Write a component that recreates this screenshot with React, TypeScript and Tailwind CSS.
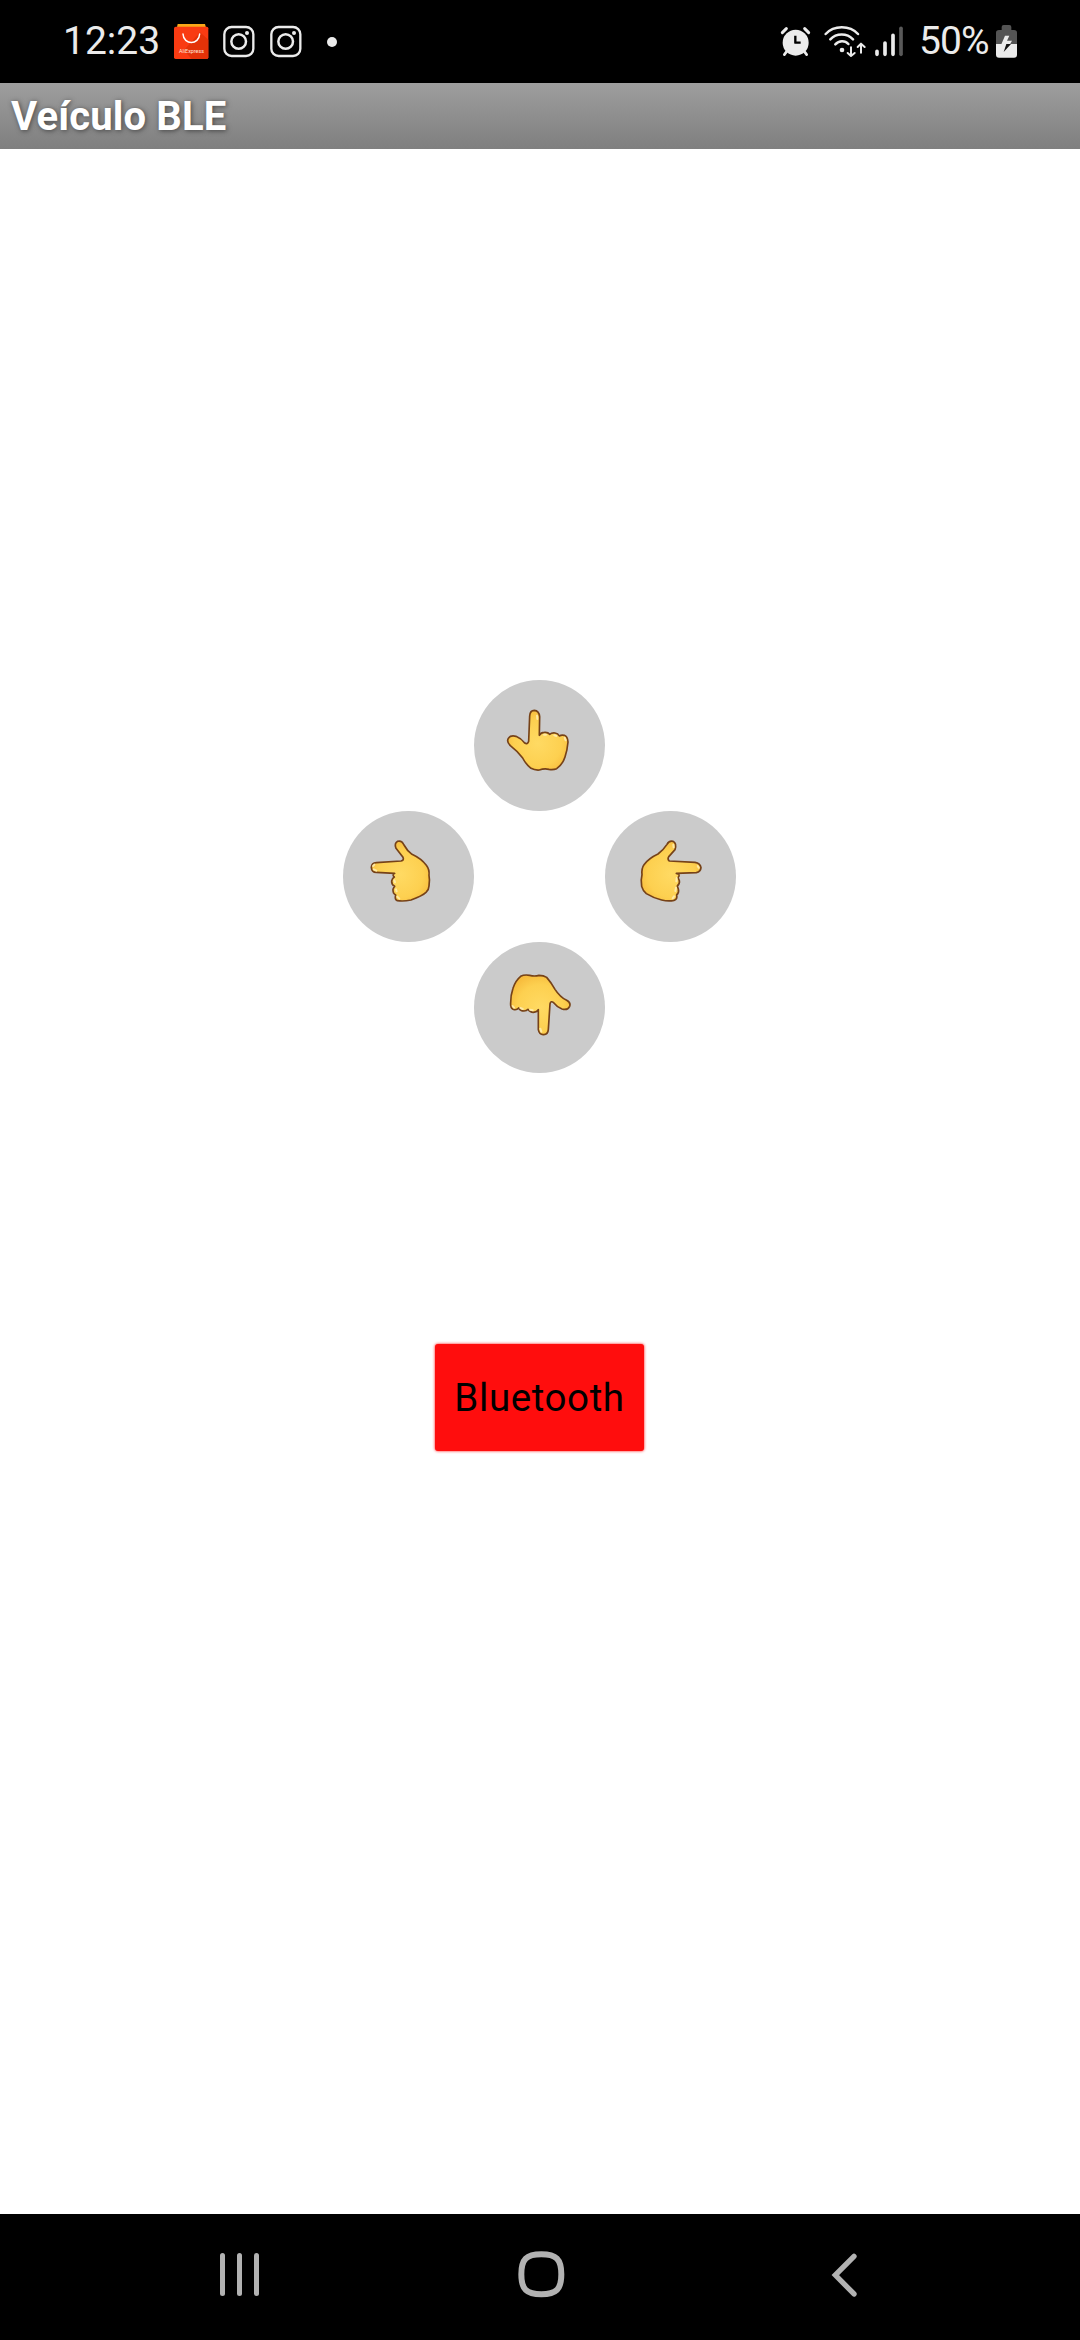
import type { ReactNode } from "react";

type HandProps = { id: string; viewBox: string; outline: string; shine: string; label: string; className: string };

function HandButton({ id, viewBox, outline, shine, label, className }: HandProps) {
  return (
    <button aria-label={label} className={`size-[131px] rounded-full bg-[#cbcbcb] ${className}`}>
      <svg viewBox={viewBox} className="size-[131px]" fill="none">
        <defs>
          <radialGradient id={id} cx="0.5" cy="0.55" r="0.65">
            <stop offset="0" stopColor="#ffda63" />
            <stop offset="0.6" stopColor="#fdd050" />
            <stop offset="1" stopColor="#f5b435" />
          </radialGradient>
        </defs>
        <path d={outline} fill={`url(#${id})`} stroke="#764218" strokeWidth="5" strokeLinejoin="round" />
        <path d={shine} stroke="#ffefb5" strokeWidth="6" strokeLinecap="round" strokeLinejoin="round" opacity="0.85" />
      </svg>
    </button>
  );
}

const hands: HandProps[] = [
  {
    id: "hand-up",
    label: "Frente",
    className: "col-start-2 row-start-1",
    viewBox: "12 12 393 393",
    outline:
      "M176 196L179 120Q180 103 193 103Q207 104 209 122L208 178Q213 169 223 169Q234 168 239 175Q245 170 255 171Q264 172 268 180Q274 176 283 178Q293 182 294 198Q292 222 285 243Q278 265 260 278Q250 282 237 280Q222 277 208 282Q194 283 183 277Q167 264 158 246Q143 226 121 209Q109 197 115 187Q121 177 138 181Q153 187 164 201Q173 206 176 196Z",
    shine: "M201 119L202 129M284 185L287 193M222 176L228 176M253 178L259 180",
  },
  {
    id: "hand-left",
    label: "Esquerda",
    className: "col-start-1 row-start-2",
    viewBox: "9 15 393 393",
    outline:
      "M183 165Q193 163 189 154L168 127Q162 112 173 106Q185 102 192 117Q201 134 216 145Q244 158 259 178Q269 191 267 208Q270 222 267 240Q267 250 258 259Q246 270 213 282Q190 287 172 284Q163 280 167 267Q158 262 159 250Q161 244 164 241Q154 235 155 225Q157 216 163 213Q155 207 164 202L109 199Q95 199 94 184Q95 171 109 170Z",
    shine: "M99 180L103 176M101 190L109 194M163 223L165 229M168 250L170 256M172 272L178 278",
  },
  {
    id: "hand-right",
    label: "Direita",
    className: "col-start-3 row-start-2",
    viewBox: "15 15 393 393",
    outline:
      "M208 165Q201 160 207 151L225 131Q231 112 219 106Q207 103 201 115Q190 132 174 144Q146 157 132 176Q124 187 126 206Q122 220 125 241Q128 253 139 263Q158 275 185 282Q206 287 222 283Q233 280 230 267Q238 260 235 249L232 240Q240 233 238 224L234 215Q243 205 229 202L289 200Q302 197 303 185Q301 172 285 169Z",
    shine: "M293 180L296 185M220 116L221 124M230 216L229 226M228 245L226 255M222 271L218 277",
  },
  {
    id: "hand-down",
    label: "Trás",
    className: "col-start-2 row-start-3",
    viewBox: "12 12 393 393",
    outline:
      "M205 215L205 275Q208 291 221 290Q234 289 235 274L240 198Q242 187 251 194Q261 207 276 213Q293 218 299 205Q303 194 290 187Q270 177 255 154Q244 134 230 118Q221 112 207 112Q194 116 179 112Q163 109 152 115Q136 128 129 151Q121 174 122 202Q124 214 133 215Q141 216 146 210Q151 219 162 219Q170 219 174 214Q180 223 190 223Q202 222 205 215Z",
    shine: "M128 204L132 209M151 210L158 213M180 215L188 217M211 272L214 281",
  },
];

/** Status bar glyph drawn at three units per pixel over the full bar height. */
function Glyph({ x, width, className, children }: { x: number; width: number; className: string; children: ReactNode }) {
  return (
    <svg viewBox={`${x} 0 ${width} 249`} className={`h-[83px] shrink-0 ${className}`} fill="none" strokeLinecap="round" strokeLinejoin="round">
      {children}
    </svg>
  );
}

function Instagram({ className }: { className: string }) {
  return (
    <Glyph x={548} width={96} className={`w-8 ${className}`}>
      <rect x="552" y="81" width="87" height="87" rx="22" stroke="#ebebeb" strokeWidth="7" />
      <circle cx="595" cy="124.500" r="22" stroke="#ebebeb" strokeWidth="7.500" />
      <circle cx="620" cy="99" r="6" fill="#ebebeb" />
    </Glyph>
  );
}

function StatusBar() {
  return (
    <header className="flex h-[83px] shrink-0 items-center bg-black text-[#ebebeb]">
      <span className="ml-[63px] w-[111px] shrink-0 text-[39px] leading-none">12:23</span>
      <Glyph x={402} width={105} className="w-[35px]">
        <path d="M410 86L413 72H495L499 86Z" fill="#f9a718" />
        <rect x="402" y="80" width="103" height="97" rx="5" fill="#f93b12" />
        <path d="M480 97L505 119V172Q505 177 500 177H455L432 151Z" fill="#e33208" />
        <path d="M429 102C431 136 477 136 479 102" stroke="#fff" strokeWidth="4.500" />
        <text x="417" y="158" fontSize="17" fill="#ffe5dc" textLength="75" lengthAdjust="spacingAndGlyphs">AliExpress</text>
      </Glyph>
      <Instagram className="ml-[13.660px]" />
      <Instagram className="ml-[15px]" />
      <span className="ml-[25.500px] size-[10px] shrink-0 rounded-full bg-[#ebebeb]" />

      <Glyph x={60} width={96} className="ml-auto w-8">
        <g stroke="#ebebeb">
          <path d="M67 98L79 86M146 98L134 86" strokeWidth="9" />
          <path d="M82 152L73 164M131 152L140 164" strokeWidth="8" />
        </g>
        <circle cx="107" cy="128" r="39" fill="#ebebeb" />
        <path d="M106 107V128H122" stroke="#000" strokeWidth="7" strokeLinecap="butt" />
      </Glyph>
      <Glyph x={192} width={129} className="ml-[12px] w-[43px]">
        <g stroke="#ebebeb" strokeWidth="7.500">
          <path d="M197 102C222 75 269 75 294 102M211 118C229 99 261 99 279 118M226 133C237 121 255 121 265 132" />
          <path d="M273 142V166M263 159L273 168L284 159M303 158V134M293 141L303 131L314 141" strokeWidth="6" />
        </g>
        <circle cx="246" cy="150" r="7" fill="#ebebeb" />
      </Glyph>
      <Glyph x={342} width={90} className="ml-[7px] w-[30px]">
        <path d="M351 154V163M375 129V163M399 106V163" stroke="#ebebeb" strokeWidth="11" />
        <path d="M423 85V163" stroke="#595959" strokeWidth="11" />
      </Glyph>
      <span className="ml-[15px] w-[77px] shrink-0 text-[39px] leading-none tracking-[-0.900px]">50%</span>
      <Glyph x={708} width={63} className="mr-[63px] w-[21px]">
        <path d="M708 132V98Q708 90 717 90H725V81Q725 75 731 75H748Q754 75 754 81V90H762Q771 90 771 98V132Z" fill="#545454" />
        <path d="M708 132H771V164Q771 173 762 173H717Q708 173 708 164Z" fill="#ebebeb" />
        <path d="M735 107H748L741 122H756L750 133H724Z" fill="#ebebeb" />
        <path d="M753 132L731 156L739 132Z" fill="#101010" />
      </Glyph>
    </header>
  );
}

function NavigationBar() {
  return (
    <nav className="flex h-[126px] shrink-0 items-center bg-black pb-[5px] text-[#b2b2b2]">
      <button aria-label="Recentes" className="ml-[219.500px] flex gap-[11.500px]">
        <span className="h-[43px] w-[5.670px] rounded-full bg-current" />
        <span className="h-[43px] w-[5.670px] rounded-full bg-current" />
        <span className="h-[43px] w-[5.670px] rounded-full bg-current" />
      </button>
      <button aria-label="Início" className="ml-[258.500px]">
        <svg viewBox="955 153 140 139" className="h-[46.330px] w-[46.670px]" fill="none" stroke="currentColor" strokeWidth="18">
          <path d="M1025 163C1070 163 1085 178 1085 223C1085 268 1070 283 1025 283C980 283 965 268 965 223C965 178 980 163 1025 163Z" />
        </svg>
      </button>
      <button aria-label="Voltar" className="ml-[266px]">
        <svg viewBox="152 157 80 132" className="h-[44px] w-[26.670px]" fill="none" stroke="currentColor" strokeWidth="16" strokeLinecap="round">
          <path d="M221 167L165 223L221 280" />
        </svg>
      </button>
    </nav>
  );
}

export default function App() {
  return (
    <div className="flex h-[2340px] w-[1080px] flex-col overflow-hidden bg-white font-['Roboto',sans-serif]">
      <StatusBar />
      <div className="flex h-[66px] shrink-0 items-center bg-linear-to-b from-[#9e9e9e] to-[#7f7f7f] pt-[2px] pl-[11px]">
        <h1 className="text-[40px] leading-none font-bold tracking-[0.150px] text-white [text-shadow:1px_1px_5px_#444]">Veículo BLE</h1>
      </div>
      <main className="flex flex-1 flex-col items-center pt-[531px]">
        <div className="ml-[343px] grid grid-cols-[repeat(3,131px)] grid-rows-[repeat(3,131px)] self-start">
          {hands.map((hand) => (
            <HandButton key={hand.id} {...hand} />
          ))}
        </div>
        <button className="mt-[271px] ml-[435px] h-[107px] w-[209px] self-start rounded-[3px] bg-[#ff0d0d] pt-[2px] text-[38.500px] leading-none tracking-[0.600px] text-black shadow-[0_0_3px_#ff0d0d]">
          Bluetooth
        </button>
      </main>
      <NavigationBar />
    </div>
  );
}
